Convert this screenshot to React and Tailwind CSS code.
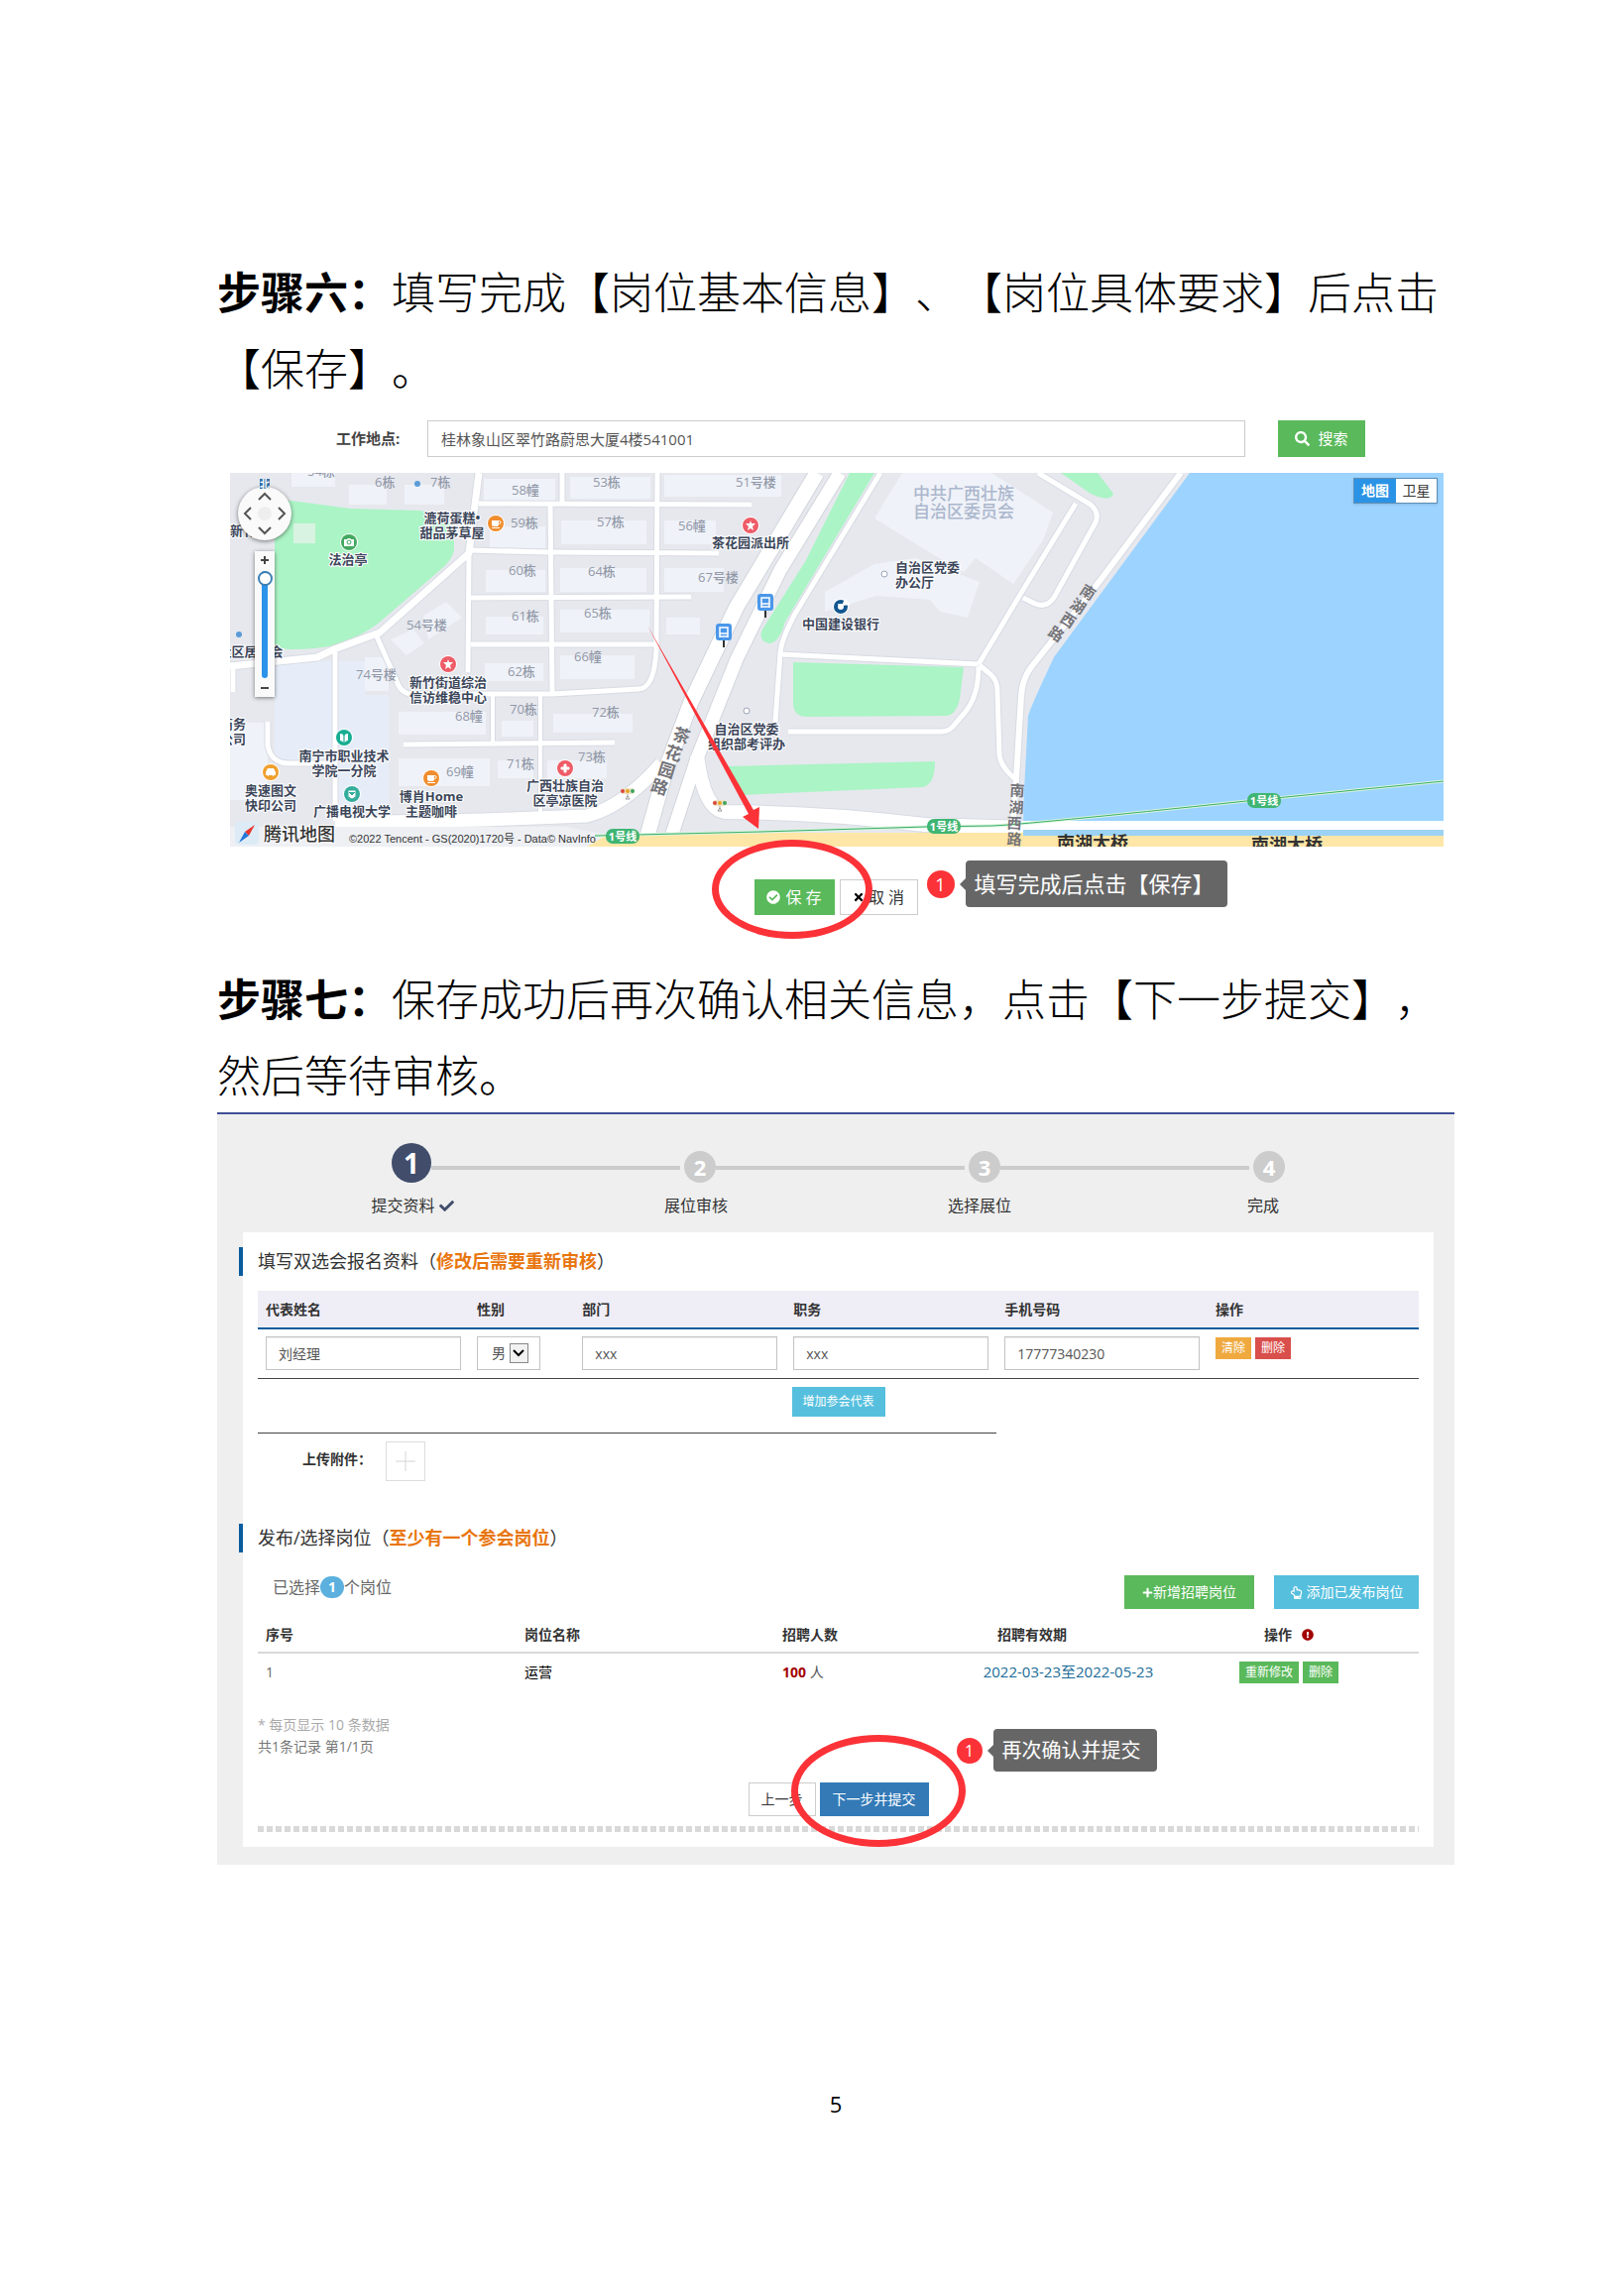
import {
  FaCheck,
  FaCheckCircle,
  FaExclamationCircle,
  FaPlus,
  FaRegHandPointUp,
  FaSearch,
  FaTimes,
} from 'react-icons/fa';

const roads = [
  { d: 'M0 195L88 186L105 178L151 161L241 81L251 0', w: 7 },
  { d: 'M251 31L526 32' },
  { d: 'M241 78L321 80L493 81' },
  { d: 'M243 126L465 125' },
  { d: 'M243 173L431 173' },
  { d: 'M241 81L240 201' },
  { d: 'M335 0V31' },
  { d: 'M323 33L325 222' },
  { d: 'M431 0L430 178Q428 218 412 218L325 223H182Q172 222 168 210L148 165' },
  { d: 'M265 223V272', w: 4 },
  { d: 'M313 223V351', w: 4 },
  { d: 'M175 274L388 272' },
  { d: 'M106 181V351' },
  { d: 'M38 251V275Q41 292 58 293H106' },
  { d: 'M3 196V221' },
  { d: 'M106 353L255 350L360 346Q398 336 435 293', w: 13 },
  { d: 'M471 285Q478 341 500 342Q600 343 701 355L800 358', w: 14 },
  { d: 'M656 0L570 142Q556 168 555 182L550 251' },
  { d: 'M555 183L755 193' },
  { d: 'M755 193L798 121L853 31' },
  { d: 'M815 0L868 32Q877 40 873 50L832 124Q825 137 812 132L800 126' },
  { d: 'M755 196Q755 225 741 242L728 257Q724 261 716 261H563' },
  { d: 'M756 194L768 204Q774 210 774 220L776 285Q778 297 791 308' },
  { d: 'M959 0L878 108L808 196Q799 208 798 225L793 308L788 377', w: 6 },
];

const avenue = [
  { d: 'M592 0L511 135L465 231L440 298L421 366', w: 15 },
  { d: 'M615 0L555 98L511 188L471 288L446 364', w: 13 },
];

const greens = [
  'M45 26Q85 31 121 36L191 38Q222 42 226 60L226 78Q224 88 212 98L148 153Q126 168 105 174Q75 180 45 177Z',
  'M625 0H650L560 150Q554 172 543 172Q532 168 537 158L581 88Z',
  'M568 191L740 196L736 228Q732 245 722 245L580 246Q569 245 568 234Z',
  'M501 296L711 291Q711 315 698 317L515 325Z',
  'M838 0H875L891 21Q888 30 868 21Z',
];

const buildings = [
  'M62 0H106V14H62Z', 'M120 12H158V32H120Z', 'M176 12H216V32H176Z', 'M256 6H328V28H256Z',
  'M343 4H424V26H343Z', 'M438 2H556V24H438Z', 'M262 54H318V76H262Z', 'M334 48H420V72H334Z',
  'M438 48H490V72H438Z', 'M258 98H318V120H258Z', 'M333 96H420V120H333Z', 'M438 96H498V120H438Z',
  'M258 145H316V163H258Z', 'M333 138H423V161H333Z', 'M440 146H474V163H440Z', 'M257 192H316V210H257Z',
  'M333 184H408V208H333Z', 'M170 241H258V264H170Z', 'M274 250H306V266H274Z', 'M326 243H406V262H326Z',
  'M170 288H262V316H170Z', 'M270 290H306V308H270Z', 'M320 290H380V308H320Z', 'M195 144L218 130L234 146L200 168Z',
  'M162 168L185 158L196 172L178 184Z', 'M136 186H160V220H136Z', 'M0 252H38V330H0Z',
  'M678 0H768L830 40L820 68L790 112L752 86L740 100L712 84L650 46Z', 'M600 120L650 92L692 86L756 110L744 146L716 140L706 128L652 124L600 140Z',
];

const buildingNames = [
  { x: 146, y: 14, t: '6栋' }, { x: 202, y: 14, t: '7栋' }, { x: 284, y: 22, t: '58幢' },
  { x: 366, y: 14, t: '53栋' }, { x: 510, y: 14, t: '51号楼' }, { x: 283, y: 55, t: '59栋' },
  { x: 370, y: 54, t: '57栋' }, { x: 452, y: 58, t: '56幢' }, { x: 281, y: 103, t: '60栋' },
  { x: 361, y: 104, t: '64栋' }, { x: 472, y: 110, t: '67号楼' }, { x: 284, y: 149, t: '61栋' },
  { x: 357, y: 146, t: '65栋' }, { x: 178, y: 158, t: '54号楼' }, { x: 280, y: 205, t: '62栋' },
  { x: 347, y: 190, t: '66幢' }, { x: 127, y: 208, t: '74号楼' }, { x: 282, y: 243, t: '70栋' },
  { x: 227, y: 250, t: '68幢' }, { x: 365, y: 246, t: '72栋' }, { x: 279, y: 298, t: '71栋' },
  { x: 351, y: 291, t: '73栋' }, { x: 218, y: 306, t: '69幢' },
];

const places = [
  { x: 119, y: 92, lines: ['法治亭'] },
  { x: 224, y: 50, lines: ['漉荷蛋糕•', '甜品茅草屋'] },
  { x: 525, y: 75, lines: ['茶花园派出所'] },
  { x: 616, y: 157, lines: ['中国建设银行'] },
  { x: 703, y: 100, lines: ['自治区党委', '办公厅'], left: true },
  { x: 220, y: 216, lines: ['新竹街道综治', '信访维稳中心'] },
  { x: 521, y: 263, lines: ['自治区党委', '组织部考评办'] },
  { x: 115, y: 290, lines: ['南宁市职业技术', '学院一分院'] },
  { x: 41, y: 325, lines: ['奥速图文', '快印公司'] },
  { x: 123, y: 346, lines: ['广播电视大学'] },
  { x: 203, y: 331, lines: ['博肖Home', '主题咖啡'] },
  { x: 338, y: 320, lines: ['广西壮族自治', '区亭凉医院'] },
  { x: 21, y: 185, lines: ['社区居委会'] },
  { x: 3, y: 258, lines: ['商务', '公司'] },
  { x: 13, y: 63, lines: ['新竹'] },
];

const pins = [
  { x: 120, y: 70, fill: '#43a85f', kind: 'camera' },
  { x: 268, y: 51, fill: '#f08d2e', kind: 'cup' },
  { x: 525, y: 53, fill: '#ee5c67', kind: 'star' },
  { x: 220, y: 193, fill: '#ee5c67', kind: 'star' },
  { x: 338, y: 298, fill: '#ee5c67', kind: 'cross' },
  { x: 115, y: 267, fill: '#18ad92', kind: 'book' },
  { x: 123, y: 324, fill: '#35ad9c', kind: 'mail' },
  { x: 41, y: 302, fill: '#f0a02e', kind: 'car' },
  { x: 203, y: 308, fill: '#f08d2e', kind: 'cup' },
];

const roadNames = [
  { chars: '茶花园路', size: 17, angle: 17, at: [[455, 266], [447, 284], [440, 301], [433, 318]] },
  { chars: '南湖西路', size: 15, angle: 33, at: [[865, 121], [855, 135], [845, 149], [833, 163]] },
  { chars: '南湖西路', size: 15, angle: 3, at: [[794, 321], [793, 338], [791, 354], [791, 370]] },
];

const steps = ['提交资料', '展位审核', '选择展位', '完成'];

const inputStyle = 'h-[34px] w-full border border-[#c4c4c4] bg-white px-3 text-sm text-[#555] shadow-[inset_0_1px_1px_rgba(0,0,0,0.08)]';

function PinShape({ kind }) {
  if (kind === 'star') return <path d="M0-5L1-2L5-2L2 1L3 5L0 3L-3 5L-2 1L-5-2L-1-2Z" />;
  if (kind === 'cross') return <path d="M-1-4H1V-1H4V1H1V4H-1V1H-4V-1H-1Z" strokeWidth="1" stroke="#fff" />;
  if (kind === 'cup') {
    return (
      <>
        <path d="M-4-3H3V1Q3 3 1 3H-2Q-4 3-4 1ZM-4 4H4V5H-4Z" />
        <circle cx="3.5" cy="-1" r="1.5" fill="none" stroke="#fff" />
      </>
    );
  }
  if (kind === 'camera') {
    return (
      <>
        <path d="M-5-3H-2L-1-4H1L2-3H5V4H-5Z" />
        <circle r="2" fill="none" stroke="#43a85f" />
      </>
    );
  }
  if (kind === 'book') return <path d="M-4-4Q-1-4-.6-2V5Q-2 3-4 3ZM4-4Q1-4 .6-2V5Q2 3 4 3Z" />;
  if (kind === 'mail') return <path d="M-4-4H4V3L0 5L-4 3ZM-3-2L0 1L3-2" stroke="#35ad9c" />;
  return <path d="M-3-4H3L5 0V3H3V4H2V3H-2V4H-3V3H-5V0Z" />;
}

function BusStop({ x, y }) {
  return (
    <g transform={`translate(${x} ${y})`}>
      <path d="M0 7V15" stroke="#333" strokeWidth="2" />
      <rect x="-8" y="-9" width="16" height="17" rx="3" fill="#4a97ea" />
      <path d="M-4 5V-5H4V5M-4 1H4M-4 4H4" fill="none" stroke="#fff" strokeWidth="1.5" />
    </g>
  );
}

function TrafficLight({ x, y }) {
  return (
    <g transform={`translate(${x} ${y})`}>
      <rect x="-7" y="-3" width="14" height="6" rx="3" fill="#eee2c8" />
      <circle cx="-5" r="2" fill="#d9483b" />
      <circle r="2" fill="#e8a524" />
      <circle cx="5" r="2" fill="#3aa65a" />
      <path d="M0 3V6M-2 8L0 5L2 8Z" fill="none" stroke="#999" />
    </g>
  );
}

function MetroTag({ x, y }) {
  return (
    <g transform={`translate(${x} ${y})`}>
      <rect x="-17" y="-8" width="34" height="15" rx="7" fill="#3fb573" />
      <text y="4" textAnchor="middle" fontSize="11" fontWeight="700" fill="#fff">1号线</text>
    </g>
  );
}

function MapDrawing() {
  return (
    <svg viewBox="0 0 1224 377" className="block h-auto w-full" role="img" aria-label="地图">
      <rect width="1224" height="377" fill="#e6e8ee" />
      <path d="M45 190H104V290H45ZM109 190H136V224H160V350H109Z" fill="#e6edf9" />
      {buildings.map((d) => <path key={d} d={d} fill="#eff2f8" />)}
      <path d="M968 0L831 186Q808 235 805 245L801 321L800 352V366H1224V0Z" fill="#9cd3ff" />
      {greens.map((d) => <path key={d} d={d} fill="#abf4c5" />)}
      <path d="M64 51H86V71H64Z" fill="#d9f3e2" />
      <g fill="none" strokeLinejoin="round">
        {roads.map((r) => <path key={r.d} d={r.d} stroke="#d8dbe3" strokeWidth={(r.w || 5) + 2} />)}
        {avenue.map((r) => <path key={r.d} d={r.d} stroke="#d2d5dc" strokeWidth={r.w + 2} />)}
        {roads.map((r) => <path key={r.d} d={r.d} stroke="#fff" strokeWidth={r.w || 5} />)}
        {avenue.map((r) => <path key={r.d} d={r.d} stroke="#fff" strokeWidth={r.w} />)}
      </g>
      <path d="M790 351H1224V360H790Z" fill="#fff" />
      <path d="M800 360H1224V366H800Z" fill="#9cd3f5" />
      <path d="M0 366L370 366L560 363L800 363V366H1224V377H0Z" fill="#fee6a6" />
      <path d="M0 357L340 357L380 365L360 377H0Z" fill="#eef0f4" />
      <path d="M368 366L535 362L701 357L768 356Q800 355 1025 331L1224 311" fill="none" stroke="#d9f5df" strokeWidth="3" />
      <path d="M368 366L535 362L701 357L768 356Q800 355 1025 331L1224 311" fill="none" stroke="#3cae66" />

      <g fontSize="13" fontWeight="500" fill="#9298a8">
        {buildingNames.map((b) => <text key={b.t + b.x} x={b.x} y={b.y}>{b.t}</text>)}
        <text x="78" y="3">54栋</text>
      </g>
      <g fontSize="17" fontWeight="500" fill="#abb7cd">
        <text x="689" y="27">中共广西壮族</text>
        <text x="689" y="45">自治区委员会</text>
      </g>
      <g fontSize="13" fontWeight="700" fill="#3c465a" stroke="#fff" strokeWidth="2" paintOrder="stroke">
        {places.map((p) => p.lines.map((line, i) => (
          <text key={line} x={p.left ? p.x - 32 : p.x} y={p.y + i * 15} textAnchor={p.left ? 'start' : 'middle'}>{line}</text>
        )))}
      </g>
      <g fontWeight="700" fill="#75757a" textAnchor="middle">
        {roadNames.map((r) => r.at.map(([x, y], i) => (
          <text key={x + '-' + y} transform={`translate(${x} ${y}) rotate(${r.angle})`} y="5" fontSize={r.size}>{r.chars[i]}</text>
        )))}
      </g>
      <g fontSize="18" fontWeight="700" fill="#333">
        <text x="834" y="380">南湖大桥</text>
        <text x="1030" y="382">南湖大桥</text>
      </g>

      {pins.map((p) => (
        <g key={p.x + '-' + p.y} transform={`translate(${p.x} ${p.y})`} fill="#fff">
          <circle r="9" fill="#fff" />
          <circle r="8" fill={p.fill} />
          <PinShape kind={p.kind} />
        </g>
      ))}
      <circle cx="189" cy="11" r="3" fill="#5b9cd8" />
      <circle cx="9" cy="163" r="3" fill="#5b9cd8" />
      <circle cx="660" cy="102" r="3" fill="#fff" stroke="#9aa5b8" />
      <circle cx="521" cy="240" r="3" fill="#fff" stroke="#9aa5b8" />
      <circle cx="616" cy="135" r="8" fill="#fff" />
      <circle cx="616" cy="135" r="5" fill="none" stroke="#12568f" strokeWidth="4" />
      <path d="M617 134L620 127L626 133Z" fill="#fff" />
      <path d="M613 132H619L616 138Z" fill="#fff" />
      <BusStop x={540} y={131} />
      <BusStop x={498} y={161} />
      <TrafficLight x={401} y={321} />
      <TrafficLight x={494} y={333} />
      <MetroTag x={396} y={367} />
      <MetroTag x={720} y={357} />
      <MetroTag x={1043} y={331} />

      <rect x="5" y="352" width="24" height="23" rx="4" fill="#dcebf5" />
      <path d="M25 355L19 366L15 362Z" fill="#e8352b" />
      <path d="M9 373L19 366L15 362Z" fill="#2177d8" />
      <text x="34" y="371" fontSize="18" fontWeight="500" fill="#333" stroke="#fff" strokeWidth="2" paintOrder="stroke">腾讯地图</text>
      <text x="120" y="373" fontSize="11" fill="#333" className="font-['Liberation_Sans','Noto_Sans_CJK_SC',sans-serif]">
        ©2022 Tencent - GS(2020)1720号 - Data© NavInfo
      </text>

      <path d="M421 154L528 340L534 337L533 359L517 347L523 344Z" fill="#fb3237" />
    </svg>
  );
}

function PanControl() {
  const arrow = 'absolute size-4 cursor-pointer';
  const icon = 'size-4 fill-none stroke-[#555] stroke-2';
  return (
    <div className="absolute top-[14px] left-2 size-[54px] rounded-full bg-[#fafafa] shadow-[0_1px_4px_rgba(0,0,0,0.5)]">
      <span className="absolute -top-2 left-[22px] bg-[#3270a8] text-[10px] leading-[10px] font-bold text-white">北</span>
      <span className="absolute top-5 left-5 size-[14px] rounded-full bg-[#eee]" />
      <button className={`${arrow} top-0.5 left-[19px]`} aria-label="向上">
        <svg viewBox="0 0 16 16" className={icon}><path d="M2 11L8 5L14 11" /></svg>
      </button>
      <button className={`${arrow} bottom-0.5 left-[19px]`} aria-label="向下">
        <svg viewBox="0 0 16 16" className={icon}><path d="M2 5L8 11L14 5" /></svg>
      </button>
      <button className={`${arrow} top-[19px] left-0.5`} aria-label="向左">
        <svg viewBox="0 0 16 16" className={icon}><path d="M11 2L5 8L11 14" /></svg>
      </button>
      <button className={`${arrow} top-[19px] right-0.5`} aria-label="向右">
        <svg viewBox="0 0 16 16" className={icon}><path d="M5 2L11 8L5 14" /></svg>
      </button>
    </div>
  );
}

function ZoomControl() {
  return (
    <div className="absolute top-[79px] left-[25px] flex h-[147px] w-5 flex-col items-center justify-between bg-[#fafafa] shadow-[0_1px_4px_rgba(0,0,0,0.5)]">
      <button className="flex h-[18px] w-5 items-center justify-center" aria-label="放大">
        <svg viewBox="0 0 10 10" className="size-[10px] stroke-[#444] stroke-2"><path d="M5 1V9M1 5H9" /></svg>
      </button>
      <input
        type="range"
        min="3"
        max="18"
        defaultValue="18"
        aria-label="缩放级别"
        className="h-[108px] w-[6px] appearance-none rounded-full bg-[#2b93ea] [direction:rtl] [writing-mode:vertical-lr] [&::-webkit-slider-thumb]:size-[15px] [&::-webkit-slider-thumb]:appearance-none [&::-webkit-slider-thumb]:rounded-full [&::-webkit-slider-thumb]:border-2 [&::-webkit-slider-thumb]:border-[#3c7fb5] [&::-webkit-slider-thumb]:bg-white"
      />
      <button className="flex h-[18px] w-5 items-center justify-center" aria-label="缩小">
        <svg viewBox="0 0 10 10" className="size-[10px] stroke-[#444] stroke-2"><path d="M1 5H9" /></svg>
      </button>
    </div>
  );
}

function WorkMap() {
  return (
    <div className="relative mt-4 mr-[11px] ml-[13px] overflow-hidden">
      <MapDrawing />
      <PanControl />
      <ZoomControl />
      <div className="absolute top-[5px] right-[6px] flex border border-[#5f8fb5] text-sm leading-6 shadow">
        <button className="w-[42px] bg-[#2b93e6] font-bold text-white">地图</button>
        <button className="w-[41px] bg-white text-[#333]">卫星</button>
      </div>
    </div>
  );
}

function Callout({ big, children }) {
  return (
    <>
      <span className={`flex items-center justify-center rounded-full bg-[#fb3237] text-white ${big ? 'size-7 text-lg' : 'size-[26px] text-base'}`}>1</span>
      <span className="ml-[5px] h-0 w-0 border-y-[6px] border-r-[6px] border-y-transparent border-r-[#666]" />
      <span className={`flex items-center rounded bg-[#666] px-[9px] text-white ${big ? 'h-[47px] w-[264px] text-[22px]' : 'h-[43px] w-[165px] text-xl'}`}>
        {children}
      </span>
    </>
  );
}

function StepBar() {
  return (
    <div className="pt-[29px]">
      <div className="flex items-end pr-[171px] pl-[176px] font-bold text-white">
        <span className="flex size-10 items-center justify-center rounded-full bg-[#414d6b] text-[28px]">1</span>
        {[2, 3, 4].map((n) => (
          <div key={n} className="flex flex-1 items-end">
            <span className="mr-1 mb-[13px] h-1 flex-1 bg-[#ccc]" />
            <span className="flex size-8 items-center justify-center rounded-full bg-[#ccc] text-[22px]">{n}</span>
          </div>
        ))}
      </div>
      <ol className="mt-[11px] grid grid-cols-4 pr-[50px] pl-[54px] text-base leading-6 text-[#333]">
        {steps.map((label, i) => (
          <li key={label} className="flex items-center justify-center gap-1">
            {label}
            {i === 0 && <FaCheck className="size-[15px] text-[#414d6b]" />}
          </li>
        ))}
      </ol>
    </div>
  );
}

function SectionTitle({ title, note }) {
  return (
    <h2 className="-ml-[19px] border-l-4 border-[#0b5c9e] pl-[15px] text-lg leading-[29px] text-[#333]">
      {title}（<b className="text-[#e8750e]">{note}</b>）
    </h2>
  );
}

function RepTable() {
  return (
    <>
      <table className="mt-[15px] w-full table-fixed text-left text-sm">
        <colgroup>
          <col className="w-2/11" />
          <col className="w-1/11" />
          <col className="w-2/11" />
          <col className="w-2/11" />
          <col className="w-2/11" />
          <col className="w-2/11" />
        </colgroup>
        <thead>
          <tr className="h-[38px] border-b-2 border-[#0b5c9e] bg-[#efeef7] text-[#333]">
            {['代表姓名', '性别', '部门', '职务', '手机号码', '操作'].map((h) => (
              <th key={h} className="px-2">{h}</th>
            ))}
          </tr>
        </thead>
        <tbody>
          <tr className="border-b border-[#444]">
            <td className="px-2 pt-[7px] pb-2"><input aria-label="代表姓名" className={inputStyle} defaultValue="刘经理" /></td>
            <td className="px-2 pt-[7px] pb-2">
              <div className="relative w-16">
                <select aria-label="性别" className="h-[34px] w-full appearance-none border border-[#c4c4c4] bg-white pl-[14px] text-sm text-[#555]">
                  <option>男</option>
                  <option>女</option>
                </select>
                <span className="pointer-events-none absolute top-[7px] right-3 flex h-5 w-[19px] items-center justify-center border border-[#888] bg-[#f2f2f2]">
                  <svg viewBox="0 0 12 8" className="w-3 fill-none stroke-black stroke-2"><path d="M1 1L6 6L11 1" /></svg>
                </span>
              </div>
            </td>
            <td className="px-2 pt-[7px] pb-2"><input aria-label="部门" className={inputStyle} defaultValue="xxx" /></td>
            <td className="px-2 pt-[7px] pb-2"><input aria-label="职务" className={inputStyle} defaultValue="xxx" /></td>
            <td className="px-2 pt-[7px] pb-2"><input aria-label="手机号码" className={inputStyle} defaultValue="17777340230" /></td>
            <td className="px-2 py-2 align-top">
              <div className="flex gap-1 text-xs text-white">
                <button className="h-[22px] w-9 bg-[#f0a93f]">清除</button>
                <button className="h-[22px] w-9 bg-[#d94f4b]">删除</button>
              </div>
            </td>
          </tr>
        </tbody>
      </table>
      <div className="flex justify-center pt-2 pb-4">
        <button className="h-[30px] w-[94px] bg-[#56bfde] text-xs text-white">增加参会代表</button>
      </div>
      <hr className="w-7/11 border-[#444]" />
    </>
  );
}

function JobTable() {
  return (
    <table className="mt-2 w-full table-fixed text-left text-sm">
      <colgroup>
        <col className="w-[261px]" />
        <col className="w-[260px]" />
        <col />
        <col className="w-[183px]" />
        <col className="w-[262px]" />
      </colgroup>
      <thead>
        <tr className="h-9 border-b-2 border-[#d9d9d9] text-[#333]">
          <th className="px-2">序号</th>
          <th className="px-2">岗位名称</th>
          <th className="px-2">招聘人数</th>
          <th className="px-5">招聘有效期</th>
          <th>
            <span className="flex items-center justify-center gap-[10px]">
              操作 <FaExclamationCircle className="size-3 text-[#a30000]" />
            </span>
          </th>
        </tr>
      </thead>
      <tbody>
        <tr className="h-[38px]">
          <td className="px-2 text-[#666]">1</td>
          <td className="px-2 text-black">运营</td>
          <td className="px-2 text-[#555]"><b className="text-[#a30000]">100</b> 人</td>
          <td className="text-center text-[15px] whitespace-nowrap text-[#1a6b96]">2022-03-23至2022-05-23</td>
          <td>
            <div className="flex justify-center gap-1 text-xs text-white">
              <button className="h-[22px] w-[60px] bg-[#5ab95a]">重新修改</button>
              <button className="h-[22px] w-9 bg-[#5ab95a]">删除</button>
            </div>
          </td>
        </tr>
      </tbody>
    </table>
  );
}

function SubmitPanel() {
  return (
    <section className="border-t-2 border-[#3f4f95] bg-[#efefef] pb-[18px]">
      <StepBar />
      <div className="mt-[15px] mr-[21px] ml-[26px] bg-white p-[15px]">
        <SectionTitle title="填写双选会报名资料" note="修改后需要重新审核" />
        <RepTable />
        <div className="mt-2 flex gap-[14px] pl-[45px]">
          <label htmlFor="attachment" className="text-sm leading-9 font-bold text-[#333]">上传附件：</label>
          <button id="attachment" className="flex size-10 items-center justify-center border border-[#ddd]">
            <svg viewBox="0 0 20 20" className="size-5 stroke-[#d4d4d4]"><path d="M10 0V20M0 10H20" /></svg>
          </button>
        </div>

        <div className="mt-[43px]">
          <SectionTitle title="发布/选择岗位" note="至少有一个参会岗位" />
        </div>
        <div className="mt-[23px] flex">
          <p className="flex h-6 items-center pl-[15px] text-base text-[#666]">
            已选择
            <span className="flex h-[22px] w-6 items-center justify-center rounded-full bg-[#5bb0de] text-sm font-bold text-white">1</span>
            个岗位
          </p>
          <button className="ml-auto flex h-[34px] w-[131px] items-center justify-center bg-[#5ab95a] text-sm text-white">
            <FaPlus className="size-[11px]" />新增招聘岗位
          </button>
          <button className="ml-5 flex h-[34px] w-[146px] items-center justify-center gap-1 bg-[#56bfde] text-sm text-white">
            <FaRegHandPointUp className="size-[13px]" />添加已发布岗位
          </button>
        </div>
        <JobTable />
        <div className="mt-6 text-sm leading-[22px]">
          <p className="text-[#aaa]">* 每页显示 10 条数据</p>
          <p className="text-[#777]">共1条记录 第1/1页</p>
        </div>
        <div className="mt-[25px] flex justify-center">
          <div className="relative flex gap-1 text-sm">
            <button className="h-[34px] w-[68px] border border-[#ccc] bg-white text-[#333]">上一步</button>
            <button className="h-[34px] w-[110px] bg-[#337ab7] text-white">下一步并提交</button>
            <span className="pointer-events-none absolute -top-12 left-[43px] h-[113px] w-[176px] rounded-[50%] border-[7px] border-[#fb3237]" />
            <div className="absolute -top-[54px] left-full ml-7 flex items-center whitespace-nowrap">
              <Callout>再次确认并提交</Callout>
            </div>
          </div>
        </div>
        <div className="mt-[10px] h-[6px] bg-[repeating-linear-gradient(90deg,#d9d9d9_0_6px,transparent_6px_9px)]" />
      </div>
    </section>
  );
}

export default function App() {
  return (
    <main lang="zh-CN" className="min-h-screen bg-white pt-[255px] pr-[171px] pb-44 pl-[219px] font-['Open_Sans','Noto_Sans_CJK_SC',sans-serif] [text-spacing-trim:space-all]">
      <p className="font-['Noto_Sans_CJK_SC',sans-serif] text-[44px] leading-[77px] font-light text-black">
        <b className="font-bold">步骤六：</b>填写完成【岗位基本信息】、【岗位具体要求】后点击【保存】。
      </p>

      <div className="mt-[15px] flex items-center pr-[90px] pl-[120px] text-[15px]">
        <label htmlFor="address" className="w-[92px] font-bold text-[#444]">工作地点:</label>
        <input id="address" className="h-[37px] flex-1 border border-[#ccc] px-[13px] text-[#555]" defaultValue="桂林象山区翠竹路蔚思大厦4楼541001" />
        <button className="ml-[33px] flex h-[37px] w-[88px] items-center justify-center gap-2 bg-[#5ab95a] text-white">
          <FaSearch className="size-[15px]" />搜索
        </button>
      </div>
      <WorkMap />

      <div className="mt-[33px] flex justify-center">
        <div className="relative flex gap-[5px] text-base">
          <button className="flex h-9 w-[81px] items-center justify-center gap-[5px] bg-[#5ab95a] text-white">
            <FaCheckCircle className="size-[14px]" />保 存
          </button>
          <button className="flex h-9 w-[79px] items-center justify-center gap-1 border border-[#ccc] bg-white text-[#333]">
            <FaTimes className="size-3 text-black" />取 消
          </button>
          <span className="pointer-events-none absolute -top-10 -left-[43px] h-[100px] w-[162px] rounded-[50%] border-[7px] border-[#fb3237]" />
          <div className="absolute -top-[19px] left-full ml-[9px] flex items-center whitespace-nowrap">
            <Callout big>填写完成后点击【保存】</Callout>
          </div>
        </div>
      </div>

      <p className="mt-[45px] font-['Noto_Sans_CJK_SC',sans-serif] text-[44px] leading-[77px] font-light text-black">
        <b className="font-bold">步骤七：</b>保存成功后再次确认相关信息，点击【下一步提交】，然后等待审核。
      </p>
      <SubmitPanel />

      <p className="mt-[225px] text-center text-[22px] leading-8 text-black">5</p>
    </main>
  );
}
